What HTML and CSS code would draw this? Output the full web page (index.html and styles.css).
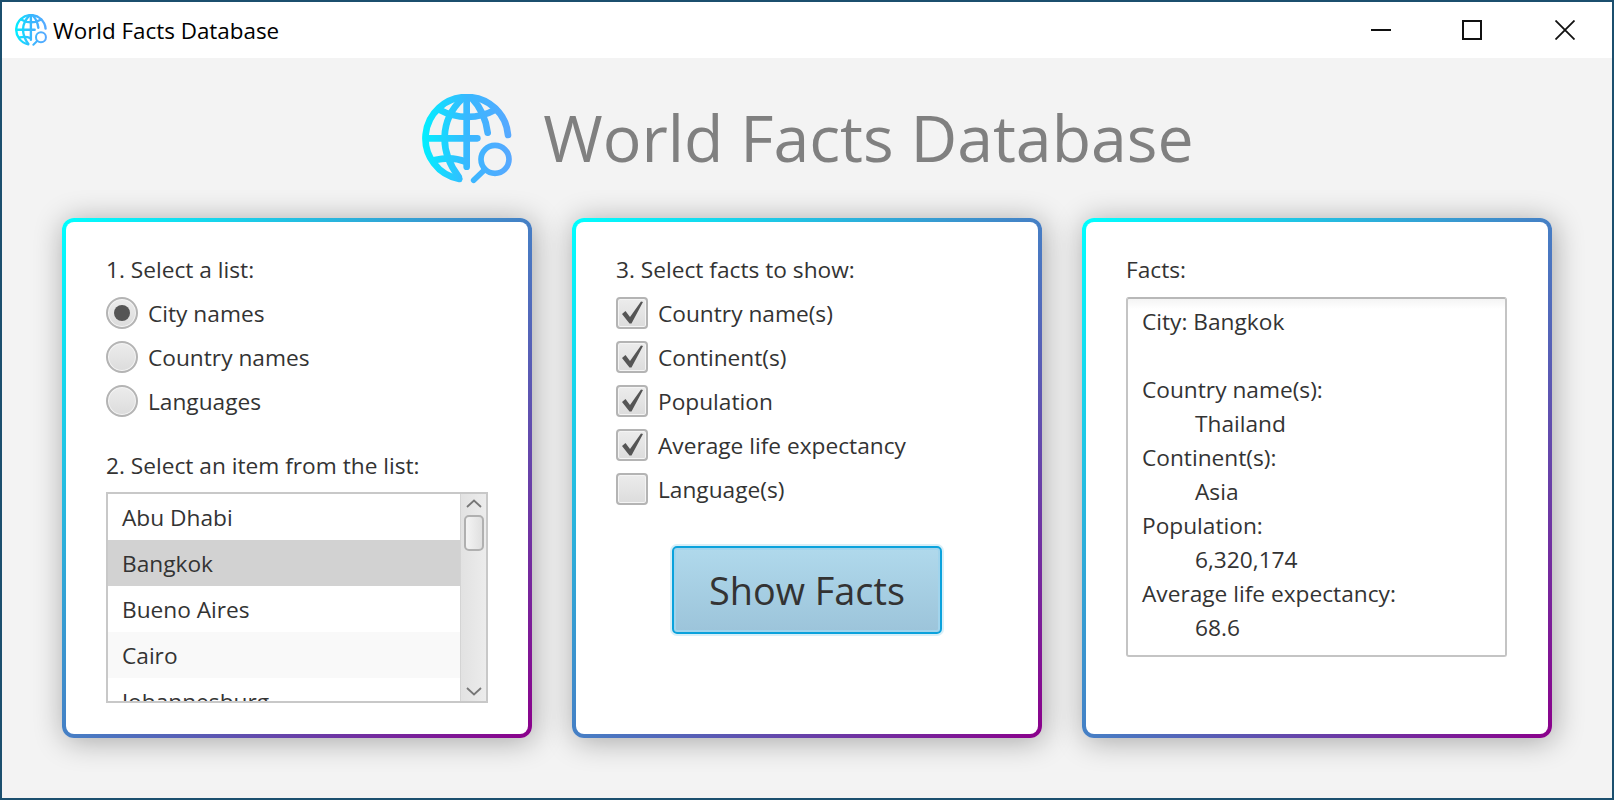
FILE: index.html
```html
<!DOCTYPE html>
<html lang="en">
<head>
  <meta charset="UTF-8">
  <title>World Facts Database</title>
  <link rel="stylesheet" href="styles.css">
</head>
<body>
  <svg class="defs" width="0" height="0">
    <defs>
      <linearGradient id="globeGrad" gradientUnits="userSpaceOnUse" x1="66" y1="0" x2="336" y2="0">
        <stop offset="0" stop-color="#00f0ff"/>
        <stop offset="0.5" stop-color="#38b8ff"/>
        <stop offset="1" stop-color="#58a8ff"/>
      </linearGradient>
      <symbol id="globe" viewBox="66 42 270 270">
        <g fill="none" stroke="url(#globeGrad)" stroke-width="20" stroke-linecap="round">
          <path d="M324 165A124 124 0 1 0 178 297"/>
          <path d="M80 175H232"/>
          <path d="M200 55V260"/>
          <path d="M188 55C118 120 118 215 176 290"/>
          <path d="M216 55C245 85 258 120 263 158"/>
          <path d="M116 88C170 118 235 118 288 88"/>
          <path d="M105 240C140 232 165 232 196 245"/>
          <circle cx="285" cy="238" r="42" stroke-width="17"/>
          <path d="M253 270L221 301" stroke-width="17"/>
        </g>
      </symbol>
      <symbol id="tick" viewBox="2 2 28 28">
        <path d="M6 17L9.500 14L14 20L25 4.500L27 5L15.500 26.500H13.500Z" fill="#555"/>
      </symbol>
    </defs>
  </svg>

  <div class="window">
    <header class="titlebar">
      <svg class="title-icon"><use href="#globe"/></svg>
      <span class="title-text">World Facts Database</span>
      <div class="win-buttons">
        <svg class="win-btn" viewBox="0 0 20 20"><path d="M0 10H20" stroke="#111" stroke-width="2"/></svg>
        <svg class="win-btn" viewBox="0 0 20 20"><rect x="1" y="1" width="18" height="18" fill="none" stroke="#111" stroke-width="2"/></svg>
        <svg class="win-btn" viewBox="0 0 20 20"><path d="M0.500 0.500L19.500 19.500M19.500 0.500L0.500 19.500" stroke="#111" stroke-width="1.800"/></svg>
      </div>
    </header>

    <main class="content">
      <div class="heading">
        <svg class="heading-icon"><use href="#globe"/></svg>
        <h1>World Facts Database</h1>
      </div>

      <div class="cards">
        <section class="card">
          <p class="label">1. Select a list:</p>
          <div class="option"><span class="radio selected"></span>City names</div>
          <div class="option"><span class="radio"></span>Country names</div>
          <div class="option"><span class="radio"></span>Languages</div>
          <p class="label list-label">2. Select an item from the list:</p>
          <div class="listbox">
            <div class="items">
              <div class="item">Abu Dhabi</div>
              <div class="item active">Bangkok</div>
              <div class="item">Bueno Aires</div>
              <div class="item odd">Cairo</div>
              <div class="item">Johannesburg</div>
            </div>
            <div class="scrollbar">
              <svg class="arrow" viewBox="0 0 16 9"><path d="M1 8L8 1.500L15 8" fill="none" stroke="#777" stroke-width="1.800"/></svg>
              <div class="thumb"></div>
              <svg class="arrow arrow-down" viewBox="0 0 16 9"><path d="M1 1L8 7.500L15 1" fill="none" stroke="#777" stroke-width="1.800"/></svg>
            </div>
          </div>
        </section>

        <section class="card">
          <p class="label">3. Select facts to show:</p>
          <div class="option"><span class="check"><svg><use href="#tick"/></svg></span>Country name(s)</div>
          <div class="option"><span class="check"><svg><use href="#tick"/></svg></span>Continent(s)</div>
          <div class="option"><span class="check"><svg><use href="#tick"/></svg></span>Population</div>
          <div class="option"><span class="check"><svg><use href="#tick"/></svg></span>Average life expectancy</div>
          <div class="option"><span class="check"></span>Language(s)</div>
          <button class="show-btn">Show Facts</button>
        </section>

        <section class="card">
          <p class="label">Facts:</p>
          <div class="facts">
            <div>City: Bangkok</div>
            <div>&nbsp;</div>
            <div>Country name(s):</div>
            <div class="indent">Thailand</div>
            <div>Continent(s):</div>
            <div class="indent">Asia</div>
            <div>Population:</div>
            <div class="indent">6,320,174</div>
            <div>Average life expectancy:</div>
            <div class="indent">68.6</div>
          </div>
        </section>
      </div>
    </main>
  </div>
</body>
</html>
```

FILE: styles.css
```css
:root {
  --text: #333333;
  --frame: #1b4f6e;
  --bg: #f3f3f3;
}

html, body {
  margin: 0;
  height: 100%;
}

body {
  font-family: 'Open Sans', 'Noto Sans', sans-serif;
  font-size: 22.7px;
  color: var(--text);
  overflow: hidden;
}

.defs {
  display: block;
  height: 0;
}

.window {
  box-sizing: border-box;
  width: 1614px;
  height: 800px;
  border: 2px solid var(--frame);
  background: var(--bg);
  display: flex;
  flex-direction: column;
}

.titlebar {
  height: 56px;
  background: #fff;
  display: flex;
  align-items: center;
  padding-left: 13px;
  flex-shrink: 0;
}

.title-icon {
  width: 32px;
  height: 32px;
  margin-right: 6px;
}

.title-text {
  color: #000;
  font-size: 22.4px;
}

.win-buttons {
  margin-left: auto;
  display: flex;
  gap: 71px;
  padding-right: 37px;
}

.win-btn {
  width: 20px;
  height: 20px;
}

.win-btn:last-child {
  margin-left: 2px;
}

.content {
  flex: 1;
  padding: 36px 60px 0;
}

.heading {
  display: flex;
  justify-content: center;
  align-items: center;
  gap: 31px;
  height: 90px;
  margin-bottom: 34px;
}

.heading-icon {
  width: 90px;
  height: 90px;
  margin-left: 2px;
}

.heading h1 {
  margin: 0 0 4px;
  font-size: 64.4px;
  font-weight: 400;
  color: #808080;
}

.cards {
  display: flex;
  gap: 40px;
}

.card {
  box-sizing: border-box;
  width: 470px;
  height: 520px;
  padding: 31px 40px 30px;
  border: 4px solid transparent;
  border-radius: 12px;
  background: linear-gradient(#fff, #fff) padding-box,
    linear-gradient(to bottom right, #00ffff, #8b008b) border-box;
  box-shadow: 2px 3px 30px rgba(0, 0, 0, 0.32);
}

.label {
  margin: 0 0 4px;
  height: 34px;
  line-height: 34px;
}

.option {
  display: flex;
  align-items: center;
  gap: 10px;
  height: 44px;
}

.radio {
  box-sizing: border-box;
  width: 32px;
  height: 32px;
  border-radius: 50%;
  border: 2px solid #b4b4b4;
  background: linear-gradient(#ececec, #dcdcdc);
  box-shadow: inset 0 0 0 1px #f4f4f4;
  display: flex;
  align-items: center;
  justify-content: center;
  flex-shrink: 0;
}

.radio.selected::after {
  content: "";
  width: 16px;
  height: 16px;
  border-radius: 50%;
  background: #555;
}

.check {
  box-sizing: border-box;
  width: 32px;
  height: 32px;
  border-radius: 4px;
  border: 2px solid #b4b4b4;
  background: linear-gradient(#ececec, #dcdcdc);
  box-shadow: inset 0 0 0 1px #f4f4f4;
  flex-shrink: 0;
  display: flex;
}

.check svg {
  width: 28px;
  height: 28px;
}

.list-label {
  margin: 26px 0 0;
}

.listbox {
  box-sizing: border-box;
  width: 382px;
  height: 211px;
  margin-top: 9px;
  border: 2px solid #c8c8c8;
  display: flex;
  overflow: hidden;
}

.items {
  flex: 1;
  overflow: hidden;
}

.item {
  box-sizing: border-box;
  height: 46px;
  line-height: 47px;
  padding-left: 14px;
}

.item.active {
  background: #d2d2d2;
}

.item.odd {
  background: #f9f9f9;
}

.scrollbar {
  width: 26px;
  flex-shrink: 0;
  box-sizing: border-box;
  border-left: 1px solid #d4d4d4;
  background: linear-gradient(to right, #e2e2e2, #ececec);
  display: flex;
  flex-direction: column;
  align-items: center;
  padding-top: 5px;
}

.arrow {
  width: 16px;
  height: 9px;
  flex-shrink: 0;
}

.thumb {
  box-sizing: border-box;
  width: 20px;
  height: 36px;
  margin-top: 7px;
  border: 2px solid #b0b0b0;
  border-radius: 5px;
  background: linear-gradient(to right, #f4f4f4, #e0e0e0);
}

.arrow-down {
  margin-top: auto;
  margin-bottom: 5px;
}

.show-btn {
  display: block;
  box-sizing: border-box;
  width: 270px;
  height: 88px;
  margin: 35px 0 0 56px;
  border: 2px solid #0ba2dc;
  border-radius: 5px;
  background: linear-gradient(#b0d9ec, #9cc4da);
  box-shadow: 0 0 0 2px #d8eff8, inset 0 0 0 2px #a2d4ec;
  font-family: inherit;
  font-size: 37.8px;
  color: var(--text);
}

.facts {
  box-sizing: border-box;
  width: 381px;
  height: 360px;
  margin-top: 10px;
  padding: 6px 14px;
  border: 2px solid #c4c4c4;
  border-top-color: #b8b8b8;
  border-radius: 3px;
  line-height: 34px;
  background: linear-gradient(#f4f4f4, #fff 10px);
}

.facts .indent {
  padding-left: 53px;
}
```
